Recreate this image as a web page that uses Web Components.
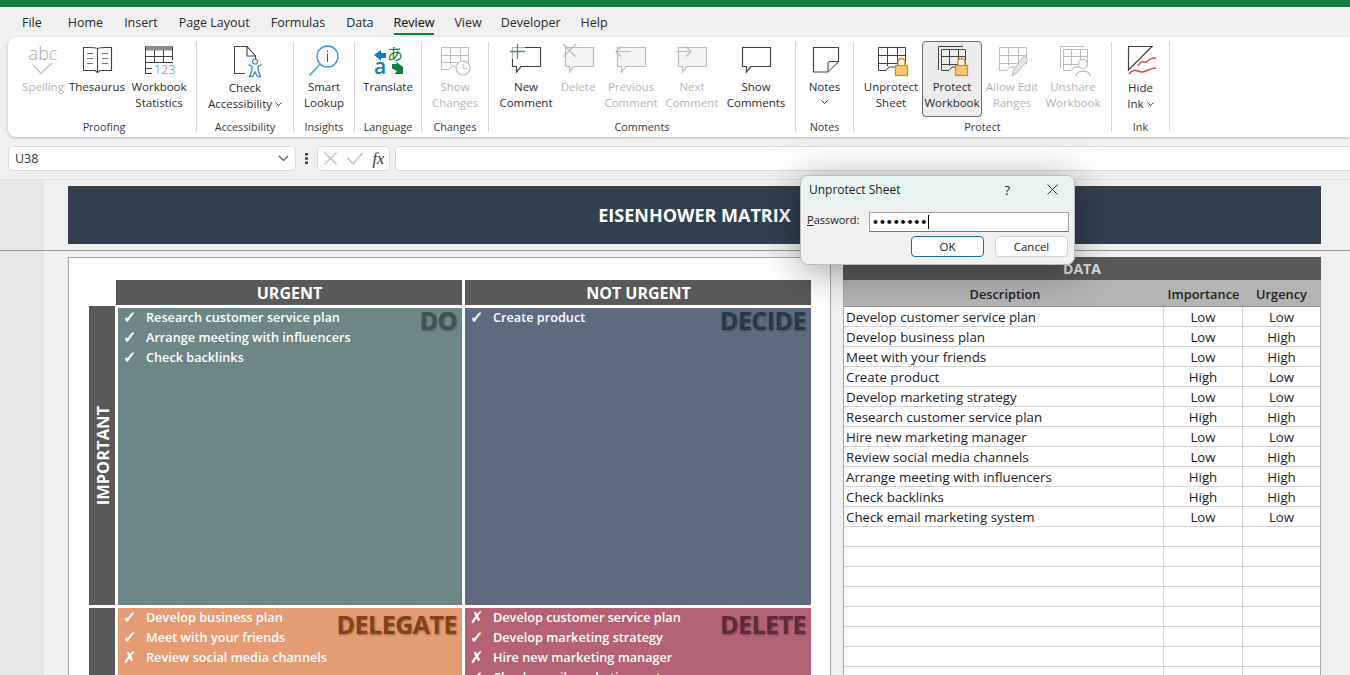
<!DOCTYPE html>
<html lang="en"><head><meta charset="utf-8"><title>Eisenhower Matrix</title>
<style>
html,body{margin:0;padding:0;background:#f0f0f0;overflow:hidden}
body{font-family:"Open Sans","Liberation Sans",sans-serif;color:#222}
</style></head>
<body>
<x-app>
  <x-tabs></x-tabs>
  <x-ribbon>
    <x-group w="189" label="Proofing" pad="13" lp="4">
      <x-rbtn w="44" icon="spelling" dis>Spelling</x-rbtn>
      <x-rbtn w="64" icon="thesaurus">Thesaurus</x-rbtn>
      <x-rbtn w="60" icon="stats">Workbook<br>Statistics</x-rbtn>
    </x-group>
    <x-group w="97" label="Accessibility" pad="0"><x-rbtn w="96" icon="access" chev="1">Check<br>Accessibility</x-rbtn></x-group>
    <x-group w="61" label="Insights" pad="0"><x-rbtn w="60" icon="lookup">Smart<br>Lookup</x-rbtn></x-group>
    <x-group w="67" label="Language" pad="0"><x-rbtn w="66" icon="translate">Translate</x-rbtn></x-group>
    <x-group w="67" label="Changes" pad="0"><x-rbtn w="66" icon="changes" dis>Show<br>Changes</x-rbtn></x-group>
    <x-group w="307" label="Comments" pad="8">
      <x-rbtn w="58" icon="newc">New<br>Comment</x-rbtn>
      <x-rbtn w="46" icon="delc" dis>Delete</x-rbtn>
      <x-rbtn w="60" icon="prevc" dis>Previous<br>Comment</x-rbtn>
      <x-rbtn w="62" icon="nextc" dis>Next<br>Comment</x-rbtn>
      <x-rbtn w="66" icon="showc">Show<br>Comments</x-rbtn>
    </x-group>
    <x-group w="58" label="Notes" pad="0"><x-rbtn w="57" icon="notes" chev="2">Notes</x-rbtn></x-group>
    <x-group w="258" label="Protect" pad="6">
      <x-rbtn w="62" icon="unprotect">Unprotect<br>Sheet</x-rbtn>
      <x-rbtn w="60" icon="protect" active>Protect<br>Workbook</x-rbtn>
      <x-rbtn w="60" icon="allow" dis>Allow Edit<br>Ranges</x-rbtn>
      <x-rbtn w="62" icon="unshare" dis>Unshare<br>Workbook</x-rbtn>
    </x-group>
    <x-group w="58" label="Ink" pad="0"><x-rbtn w="57" icon="ink" chev="1">Hide<br>Ink</x-rbtn></x-group>
  </x-ribbon>
  <x-formula-bar></x-formula-bar>
  <x-sheet>
    <x-matrix slot="left"></x-matrix>
    <x-data-table slot="right"></x-data-table>
  </x-sheet>
  <x-dialog></x-dialog>
</x-app>
<script>
const grid=(x,y,w,h,c,cols=3,rows=3)=>{let d=`M${x+.5} ${y+.5}H${x+w-.5}V${y+h-7}M${x+.5} ${y+.5}V${y+h-.5}H${x+8}L${x+11} ${y+h-4}H${x+w-8}`;
 for(let i=1;i<cols;i++){const X=x+Math.round(w*i/cols)+.5;d+=`M${X} ${y}V${y+h-5}`}
 for(let i=1;i<rows;i++){const Y=y+Math.round(h*i/rows)+.5;d+=`M${x} ${Y}H${x+w}`}
 return `<path d="${d}" fill="none" stroke="${c}"/>`};
const bubble=(x,c,f='none')=>`<path d="M${x+.5} 4.5H${x+28.5}V23.5H${x+9}L${x+4.5} 29V23.5H${x+.5}Z" fill="${f}" stroke="${c}" stroke-width="1.2"/>`;
const lock=x=>`<path d="M${x+3} 23V19a3.5 3.5 0 0 1 7 0V23Z" fill="#fff" stroke="#d98a24" stroke-width="1.4"/><rect x="${x+.5}" y="22.5" width="12" height="10" fill="#f7c873" stroke="#d98a24" stroke-width="1.3"/>`;
const G='#bdbdbd',D='#444';
const ICONS={
spelling:`<text x="22" y="17" text-anchor="middle" font-size="18" font-weight="300" font-family="Open Sans" fill="#a8a8a8">abc</text><path d="M12 22L20 30.500L31 20" fill="none" stroke="#c6c6c6" stroke-width="1.2"/>`,
thesaurus:`<path d="M22.500 5.500C20 4 12 4.500 8.500 4.500V27.500H20L22.500 29.500L25 27.500H36.500V4.500C33 4.500 25 4 22.500 5.500ZM22.500 5.500V29" fill="none" stroke="${D}" stroke-width="1.1"/><path d="M12 10.500h6" stroke="#d13438"/><path d="M12 15.500h6M12 20.500h6M27 10.500h6M27 15.500h6M27 20.500h6" stroke="#777"/>`,
stats:`<rect x="8" y="3" width="28" height="4.500" fill="#8b8b8b"/><path d="M8.500 3.500V30.500H15M35.500 3.500V17M8 13.500H36M8 19.500H36M8 25.500H15M17.500 7V19M26.500 7V19" fill="none" stroke="${D}"/><text x="17" y="31" font-size="12.500" font-weight="300" font-family="Open Sans" fill="#2f93c9">123</text>`,
access:`<path d="M11.500 3.500H24L32.500 13V17M24 3.500V13H32.500M11.500 3.500V30.500H22" fill="none" stroke="${D}" stroke-width="1.1"/><circle cx="32" cy="18.500" r="2.500" fill="none" stroke="#2f8fc4" stroke-width="1.2"/><path d="M25.500 21.500L29 23.500V27L26.500 33.500H29.500L32 29L34.500 33.500H37.500L35 27V23.500L38.500 21.500" fill="none" stroke="#2f8fc4" stroke-width="1.3"/>`,
lookup:`<circle cx="25.500" cy="13.500" r="10.500" fill="none" stroke="#3a9ad0" stroke-width="1.3"/><path d="M18 21L7.500 32.500" stroke="#3a9ad0" stroke-width="1.3"/><path d="M25.500 10.500V19M25.500 7.500v1.500" stroke="#555"/>`,
translate:`<path d="M8 12L15 7V10H20V15H15V17.500Z" fill="#0f7cc4"/><text x="14" y="31" text-anchor="middle" font-size="21" font-family="Open Sans" font-weight="600" fill="#0f7cc4">a</text><text x="29" y="17" text-anchor="middle" font-size="16" font-family="Noto Sans CJK JP" fill="#107c41">あ</text><path d="M26 21H31L30 18.500L37 24V31H28.500L31 28L26 25.500Z" fill="#107c41"/>`,
changes:grid(8,4,28,23,G)+`<circle cx="30" cy="25" r="7" fill="#fff" stroke="${G}" stroke-width="1.2"/><path d="M30 21V25.500H34" fill="none" stroke="${G}"/>`,
newc:bubble(8,D)+`<rect x="6" y="1" width="15" height="15" fill="#fff" opacity=".6"/><path d="M13.500 1V16M6 8.500H21" stroke="#3c9a5f" stroke-width="1.3"/>`,
delc:bubble(9,G,'#f4f4f4')+`<path d="M7 1L20 14M20 1L7 14" stroke="${G}" stroke-width="1.2"/>`,
prevc:bubble(8,G,'#f4f4f4')+`<path d="M22 8.500H7M12 3.500L7 8.500L12 13.500" fill="none" stroke="${G}" stroke-width="1.2"/>`,
nextc:bubble(8,G,'#f4f4f4')+`<path d="M6 8.500H21M16 3.500L21 8.500L16 13.500" fill="none" stroke="${G}" stroke-width="1.2"/>`,
showc:bubble(8,D),
notes:`<path d="M10.500 4.500H35.500V18.500L25 29H10.500Z" fill="#fff" stroke="${D}" stroke-width="1.2"/><path d="M35 18.500H27Q25 18.500 25 20.500V29" fill="#f1f1f1" stroke="${D}"/>`,
unprotect:grid(9,4,28,24,D)+lock(26),
protect:`<path d="M8.500 27V3.500H33" fill="none" stroke="${D}"/>`+grid(11,6,25,22,D)+lock(25),
allow:grid(9,4,28,24,G)+`<path d="M34 13L38 17L27 30L22 33L23.500 27Z" fill="#e4e4e4" stroke="${G}"/>`,
unshare:`<path d="M9.500 25V3.500H33" fill="none" stroke="${G}"/>`+grid(12,6,25,22,G)+`<circle cx="32" cy="21" r="4.500" fill="#fff" stroke="${G}" stroke-width="1.2"/><path d="M25 33C25 26.500 39 26.500 39 33" fill="#fff" stroke="${G}" stroke-width="1.2"/>`,
ink:`<path d="M9.500 3.500H33L9.500 27Z" fill="none" stroke="${D}" stroke-width="1.2"/><path d="M19 23C23 15 26 21 28 18.500S32 15 37 15M10 31C14 25 18 28 22 29S30 25 37 25" fill="none" stroke="#d9484f" stroke-width="1.5"/>`
};
const def=(n,html)=>{class C extends HTMLElement{constructor(){super();this.attachShadow({mode:'open'}).innerHTML=typeof html==='function'?html(this):html}}customElements.define(n,C)};

def('x-app',`<style>:host{display:block;position:relative;width:1350px;height:675px;overflow:hidden;background:#f0f0f0;border-top:7px solid #107c41;box-sizing:border-box}</style><slot></slot>`);

def('x-tabs',`<style>:host{display:flex;height:30px;align-items:center;padding:1px 0 0 22px;gap:21px;font-size:12.500px;color:#2b2b2b;box-sizing:border-box}
span{position:relative;display:block;line-height:29px}
.file{margin-right:5px}.da{margin-right:-1px}.rv{margin-right:-1px}.vw{margin-right:-2px}.dv{margin-right:-1px}
.on{color:#1f1f1f;-webkit-text-stroke:.2px #1f1f1f}.on::after{content:"";position:absolute;left:0;right:0;bottom:2px;height:2px;background:#107c41}</style>
<span class="file">File</span><span>Home</span><span>Insert</span><span>Page Layout</span><span>Formulas</span><span class="da">Data</span><span class="on rv">Review</span><span class="vw">View</span><span class="dv">Developer</span><span>Help</span>`);

def('x-ribbon',`<style>:host{display:flex;height:100px;margin-left:8px;background:#fff;border-radius:8px 0 0 8px;box-shadow:0 1px 3px rgba(0,0,0,.22);position:relative}</style><slot></slot>`);

def('x-group',h=>`<style>:host{display:block;padding:5px 0 6px;width:${h.getAttribute('w')}px;flex:none;box-sizing:border-box}
.g{height:89px;display:flex;flex-direction:column;border-right:1px solid #d6d6d6}
.b{display:flex;height:76px;margin-top:-1px;padding-left:${h.getAttribute('pad')||0}px}
.l{height:14px;line-height:14px;font-size:10.800px;text-align:center;color:#3a3a3a;white-space:nowrap;margin-top:auto;margin-bottom:-3px;padding-left:${h.getAttribute('lp')||0}px}</style>
<div class="g"><div class="b"><slot></slot></div><div class="l">${h.getAttribute('label')}</div></div>`);

def('x-rbtn',h=>{const dis=h.hasAttribute('dis'),act=h.hasAttribute('active'),ch=h.getAttribute('chev');
const chev=`<svg width="7" height="5" viewBox="0 0 7 5" style="vertical-align:1px;margin-left:3px"><path d="M.5 .5L3.500 3.500L6.500 .5" fill="none" stroke="#444"/></svg>`;
return `<style>:host{display:block;width:${h.getAttribute('w')}px;height:76px;box-sizing:border-box;text-align:center;font-size:11.500px;line-height:16px;color:${dis?'#b4b4b4':'#2b2b2b'};white-space:nowrap;flex:none;
${act?'background:#ececec;border:1px solid #6b6b6b;border-radius:4px;':''}}
svg.i{display:block;margin:${act?1:2}px auto 0;overflow:visible}.t{${ch==='1'?'position:relative;top:1px;':''}}.c{height:16px;line-height:14px}</style>
<svg class="i" width="44" height="36" viewBox="0 0 44 36">${ICONS[h.getAttribute('icon')]}</svg><div class="t"><slot></slot>${ch==='1'?chev:''}${ch==='2'?'<div class="c">'+chev.replace('margin-left:3px','')+'</div>':''}</div>`});

def('x-formula-bar',`<style>:host{display:flex;height:42px;padding:9px 0 8px 8px;box-sizing:border-box;align-items:stretch;color:#333}
.b{background:#fff;border:1px solid #dcdcdc;border-radius:4px;box-sizing:border-box;display:flex;align-items:center}
.n{width:288px;padding:0 6px;justify-content:space-between;font-size:12.500px}.d{width:21px;display:flex;align-items:center;justify-content:center}
.f{width:73px;justify-content:space-between;padding:0 5px 0 6px;margin-right:5px}.i{flex:1;margin-right:-4px}
.fx{font:italic 16px "Liberation Serif",serif;color:#333}</style>
<div class="b n"><span>U38</span><svg width="11" height="7" viewBox="0 0 11 7"><path d="M1 1L5.500 5.500L10 1" fill="none" stroke="#555" stroke-width="1.2"/></svg></div>
<div class="d"><svg width="3" height="11" viewBox="0 0 3 11"><path d="M0 0h3v2.500H0zM0 4.200h3v2.500H0zM0 8.400h3v2.500H0z" fill="#444"/></svg></div>
<div class="b f"><svg width="13" height="13" viewBox="0 0 13 13"><path d="M.5 .5L12.500 12.500M12.500 .5L.5 12.500" stroke="#bdbdbd" stroke-width="1.2"/></svg><svg width="16" height="13" viewBox="0 0 16 13"><path d="M.5 6L6 12L15.500 1" fill="none" stroke="#bdbdbd" stroke-width="1.2"/></svg><span class="fx">fx</span></div>
<div class="b i"></div>`);

def('x-sheet',`<style>:host{display:block;background:linear-gradient(90deg,#e6e6e6 44px,#f0f0f0 44px);height:496px;overflow:hidden;border-top:1px solid #dedede;box-sizing:border-box}
.top{height:64px;padding:6px 29px 0 68px;border-bottom:1px solid #9a9a9a}
.ban{height:58px;background:#323f4f;color:#fff;font-weight:700;font-size:18px;display:flex;align-items:center;justify-content:center}
.row{display:flex;gap:12px;padding:6px 29px 0 68px}</style>
<div class="top"><div class="ban">EISENHOWER MATRIX</div></div>
<div class="row"><slot name="left"></slot><slot name="right"></slot></div>`);

const Q=(cls,title,items)=>`<div class="q ${cls}"><ul>${items.map(([m,t])=>`<li><b class="${m?'y':'n'}">${m?'✓':'✗'}</b>${t}</li>`).join('')}</ul><div class="big">${title}</div></div>`;
def('x-matrix',`<style>:host{display:block;width:763px;height:500px;flex:none;background:#fff;border:1px solid #a8a8a8;box-sizing:border-box;padding:22px 0 0 20px}
.g{display:grid;grid-template-columns:27px 346px 349px;grid-template-rows:26px 302px 140px;color:#fff;font-weight:700}
.h{background:#595959;margin-bottom:1px;padding:1px 0 0 1px;display:flex;align-items:center;justify-content:center;font-size:16px}
.h.n{margin-left:3px}
.v{background:#595959;margin-right:1px;margin-bottom:3px;display:flex;align-items:center;justify-content:center}
.v span{writing-mode:vertical-rl;transform:rotate(180deg);font-size:16.500px}
.q{display:flex;justify-content:space-between;margin:2px 0 3px 2px;padding-right:5px}
.q.r{margin-left:3px}.q.low{margin-top:0}
ul{list-style:none;margin:0;padding:0;font-size:12.700px;font-weight:600;white-space:nowrap}
li{height:20px;line-height:19px;display:flex}
b{width:28px;padding-left:5px;box-sizing:border-box;font:700 16px/19px "DejaVu Sans",sans-serif;flex:none}
b.y{-webkit-text-stroke:.5px #fff}b.n{-webkit-text-stroke:.1px #fff}
.big{font-size:25px;line-height:24px;font-weight:700;letter-spacing:-.5px;text-shadow:1px 1px 2px rgba(0,0,0,.3)}
.do{background:#6e8687}.do .big{color:#3f5152}.de{background:#5e6b7f}.de .big{color:#2c3646}
.dl{background:#e59b73}.dl .big{color:#84411a;line-height:32px}.dx{background:#b56374}.dx .big{color:#5f2a3a;line-height:32px}</style>
<div class="g"><span></span><div class="h">URGENT</div><div class="h n">NOT URGENT</div>
<div class="v"><span>IMPORTANT</span></div>`+
Q('do','DO',[[1,'Research customer service plan'],[1,'Arrange meeting with influencers'],[1,'Check backlinks']])+
Q('de r','DECIDE',[[1,'Create product']])+
`<div class="v"></div>`+
Q('dl low','DELEGATE',[[1,'Develop business plan'],[1,'Meet with your friends'],[0,'Review social media channels']])+
Q('dx r low','DELETE',[[0,'Develop customer service plan'],[1,'Develop marketing strategy'],[0,'Hire new marketing manager'],[1,'Check email marketing system']])+`</div>`);

const ROWS=[['Develop customer service plan','Low','Low'],['Develop business plan','Low','High'],['Meet with your friends','Low','High'],['Create product','High','Low'],['Develop marketing strategy','Low','Low'],['Research customer service plan','High','High'],['Hire new marketing manager','Low','Low'],['Review social media channels','Low','High'],['Arrange meeting with influencers','High','High'],['Check backlinks','High','High'],['Check email marketing system','Low','Low']];
while(ROWS.length<19)ROWS.push(['','','']);
def('x-data-table',`<style>:host{display:block;width:478px;flex:none;box-sizing:border-box;font-size:13.300px;color:#222;border:solid #a8a8a8;border-width:0 1px}
.t{background:#595959;color:#ddd;font-weight:700;height:23px;line-height:23px;text-align:center;font-size:14px;margin:0 -1px}
.r{display:grid;grid-template-columns:320px 79px 1fr;height:20px;line-height:20px;background:#fff;border-bottom:1px solid #d4d4d4;box-sizing:border-box}
.r>*{border-right:1px solid #d4d4d4;text-align:center;white-space:nowrap;overflow:hidden}.r>:last-child{border:0}.r>:first-child{text-align:left;padding-left:2px}
.r.h{height:27px;line-height:28px;font-size:12.800px;background:#b4b4b4;font-weight:600;border-bottom:1px solid #8c8c8c}.r.h>*{border:0}.r.h>:first-child{text-align:center}</style>
<div class="t">DATA</div><div class="r h"><div>Description</div><div>Importance</div><div>Urgency</div></div>`+ROWS.map(r=>`<div class="r"><div>${r[0]}</div><div>${r[1]}</div><div>${r[2]}</div></div>`).join(''));

def('x-dialog',`<style>:host{position:absolute;left:800px;top:168px;width:275px;height:90px;background:#f0f0f0;border-radius:8px;border:1px solid #bcbcbc;box-sizing:border-box;box-shadow:0 6px 40px rgba(0,0,0,.38);font-size:12px;color:#222;display:block;overflow:hidden}
.ti{height:29px;background:#e8f5f2;display:flex;align-items:center;padding:0 0 2px 8px;box-sizing:border-box}
.ti span{flex:1}.ti i{font-style:normal;font-size:13px;margin-right:37px}.ti svg{margin-right:16px}
.p{display:flex;align-items:center;height:20px;margin-top:7px;padding-left:6px;font-size:11px}
.p label{width:62px;position:relative;top:-3px}.p u{text-decoration:underline}
.inp{width:200px;height:20px;box-sizing:border-box;background:#fff;border:1px solid #a0a0a0;border-bottom-color:#777;display:flex;align-items:center;padding-left:2px;font:700 11px "DejaVu Sans",sans-serif;letter-spacing:-.15px;color:#000}
.c{display:inline-block;width:1px;height:14px;background:#000;margin-left:1px}
.bs{display:flex;justify-content:flex-end;gap:11px;padding-right:6px;margin-top:4px}
.bt{height:21px;width:73px;box-sizing:border-box;background:#fdfdfd;border:1px solid #d2d2d2;border-radius:4px;text-align:center;line-height:19px;font-size:11.500px}
.ok{border:1px solid #1a6fa8}</style>
<div class="ti"><span>Unprotect Sheet</span><i>?</i><svg width="11" height="11" viewBox="0 0 11 11"><path d="M.5 .5L10.500 10.500M10.500 .5L.5 10.500" stroke="#333"/></svg></div>
<div class="p"><label><u>P</u>assword:</label><div class="inp">••••••••<span class="c"></span></div></div>
<div class="bs"><div class="bt ok">OK</div><div class="bt">Cancel</div></div>`);
</script>
</body></html>
